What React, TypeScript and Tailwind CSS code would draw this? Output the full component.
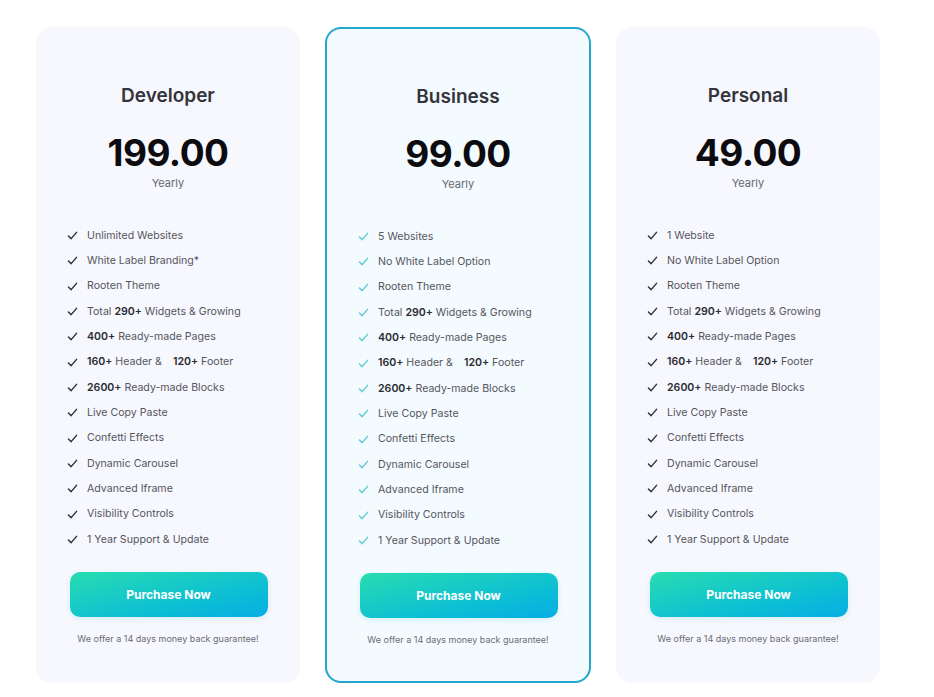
import React from 'react';

type Feature = React.ReactNode;

const B = ({ children }: { children: React.ReactNode }) => (
  <span className="font-semibold text-[#2b2b33]">{children}</span>
);

const common: Feature[] = [
  'Rooten Theme',
  <>Total <B>290+</B> Widgets &amp; Growing</>,
  <><B>400+</B> Ready-made Pages</>,
  <><B>160+</B> Header &amp;<span className="inline-block w-[11px]" /><B>120+</B> Footer</>,
  <><B>2600+</B> Ready-made Blocks</>,
  'Live Copy Paste',
  'Confetti Effects',
  'Dynamic Carousel',
  'Advanced Iframe',
  'Visibility Controls',
  '1 Year Support & Update',
];

const plans = [
  {
    name: 'Developer',
    price: '199.00',
    features: ['Unlimited Websites', 'White Label Branding*', ...common],
    featured: false,
  },
  {
    name: 'Business',
    price: '99.00',
    features: ['5 Websites', 'No White Label Option', ...common],
    featured: true,
  },
  {
    name: 'Personal',
    price: '49.00',
    features: ['1 Website', 'No White Label Option', ...common],
    featured: false,
  },
];

const Check = ({ teal }: { teal: boolean }) => (
  <svg
    viewBox="0 0 12 10"
    className="h-[9px] w-[11px] shrink-0"
    fill="none"
    stroke={teal ? '#5ec9d3' : '#2f2f36'}
    strokeWidth="1.6"
    strokeLinecap="round"
    strokeLinejoin="round"
  >
    <path d="M1.5 5.5l3 3 6-7" />
  </svg>
);

const App: React.FC = () => {
  return (
    <div className="min-h-screen w-[934px] h-[697px] overflow-hidden bg-white font-['Inter',sans-serif]">
      <div className="flex gap-[25px] pl-[36px] pt-[27px]">
        {plans.map((plan) => (
          <div
            key={plan.name}
            className={`flex flex-col items-center rounded-[16px] h-[656px] ${
              plan.featured
                ? 'w-[266px] border-2 border-[#22a6cf] bg-[#f4fbfe]'
                : 'w-[264px] bg-[#f7f8fd] pt-[1px]'
            }`}
          >
            <h2 className="mt-[56px] text-[19px] leading-[24px] font-semibold text-[#34343c]">
              {plan.name}
            </h2>
            <div className="mt-[23px] text-[37px] leading-[44px] font-bold tracking-[-0.5px] text-[#0b0b10]">
              {plan.price}
            </div>
            <div className="mt-[1px] text-[11px] leading-[14px] text-[#666670]">Yearly</div>

            <ul className="mt-[33px] w-full pl-[31px]">
              {plan.features.map((f, i) => (
                <li
                  key={i}
                  className="flex h-[25.33px] items-center gap-[9px] text-[10.6px] text-[#55555e]"
                >
                  <Check teal={plan.featured} />
                  <span>{f}</span>
                </li>
              ))}
            </ul>

            <button className="mt-[20px] ml-[1px] h-[45px] w-[198px] rounded-[10px] bg-gradient-to-br from-[#28dcb0] to-[#09ade4] text-[12px] font-bold text-white shadow-[0_2px_6px_rgba(20,180,200,0.15)]">
              Purchase Now
            </button>
            <p className="mt-[15px] text-[9px] text-[#6b6b75]">
              We offer a 14 days money back guarantee!
            </p>
          </div>
        ))}
      </div>
    </div>
  );
};

export default App;
